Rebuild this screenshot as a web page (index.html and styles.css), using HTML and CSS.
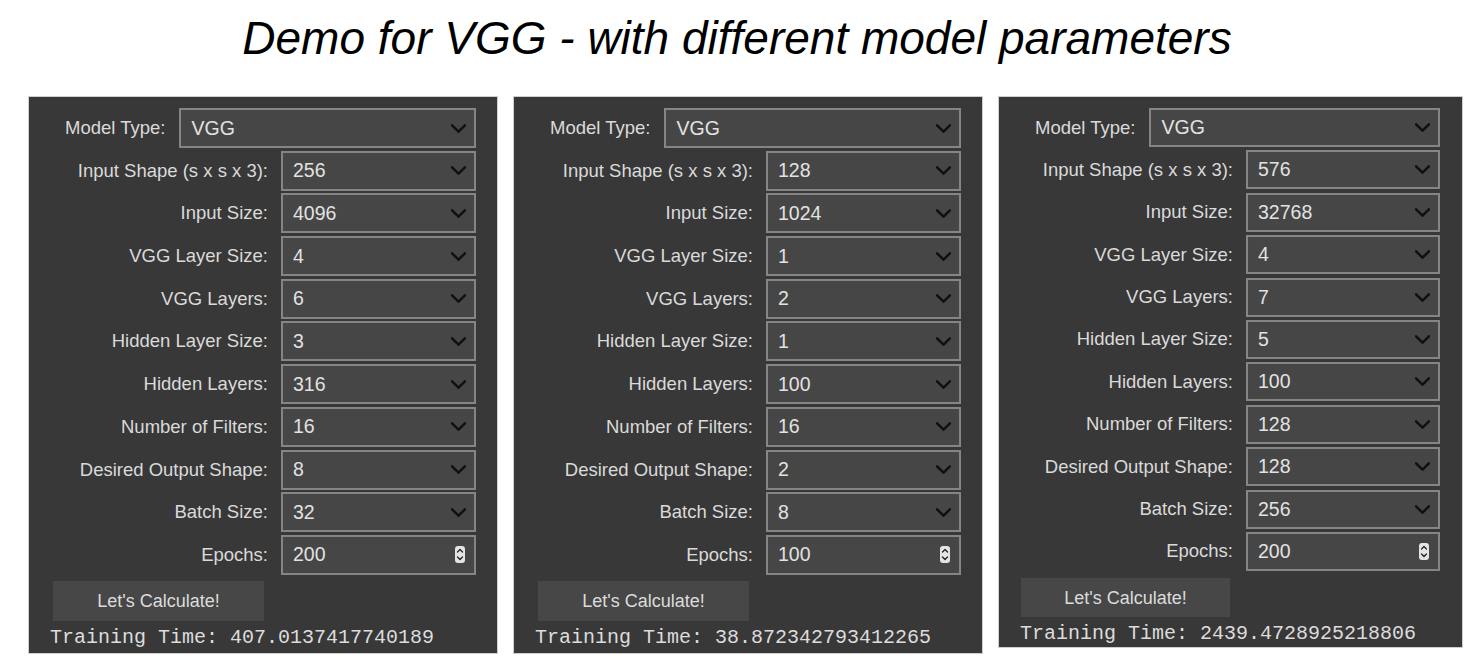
FILE: index.html
```html
<!DOCTYPE html>
<html lang="en">
<head>
<meta charset="utf-8">
<title>Demo for VGG</title>
<link rel="stylesheet" href="styles.css">
</head>
<body>
<h1 class="title">Demo for VGG - with different model parameters</h1>
<div class="panels">

  <section class="panel">
    <div class="rows">
      <div class="row row--model"><span class="label">Model Type:</span><div class="select"><span>VGG</span><svg class="chev" viewBox="0 0 14 8"><path d="M1 1l6 6 6-6"/></svg></div></div>
      <div class="row"><span class="label">Input Shape (s x s x 3):</span><div class="select"><span>256</span><svg class="chev" viewBox="0 0 14 8"><path d="M1 1l6 6 6-6"/></svg></div></div>
      <div class="row"><span class="label">Input Size:</span><div class="select"><span>4096</span><svg class="chev" viewBox="0 0 14 8"><path d="M1 1l6 6 6-6"/></svg></div></div>
      <div class="row"><span class="label">VGG Layer Size:</span><div class="select"><span>4</span><svg class="chev" viewBox="0 0 14 8"><path d="M1 1l6 6 6-6"/></svg></div></div>
      <div class="row"><span class="label">VGG Layers:</span><div class="select"><span>6</span><svg class="chev" viewBox="0 0 14 8"><path d="M1 1l6 6 6-6"/></svg></div></div>
      <div class="row"><span class="label">Hidden Layer Size:</span><div class="select"><span>3</span><svg class="chev" viewBox="0 0 14 8"><path d="M1 1l6 6 6-6"/></svg></div></div>
      <div class="row"><span class="label">Hidden Layers:</span><div class="select"><span>316</span><svg class="chev" viewBox="0 0 14 8"><path d="M1 1l6 6 6-6"/></svg></div></div>
      <div class="row"><span class="label">Number of Filters:</span><div class="select"><span>16</span><svg class="chev" viewBox="0 0 14 8"><path d="M1 1l6 6 6-6"/></svg></div></div>
      <div class="row"><span class="label">Desired Output Shape:</span><div class="select"><span>8</span><svg class="chev" viewBox="0 0 14 8"><path d="M1 1l6 6 6-6"/></svg></div></div>
      <div class="row"><span class="label">Batch Size:</span><div class="select"><span>32</span><svg class="chev" viewBox="0 0 14 8"><path d="M1 1l6 6 6-6"/></svg></div></div>
      <div class="row"><span class="label">Epochs:</span><div class="select"><span>200</span><svg class="spin" viewBox="0 0 10 17"><rect x="0" y="0" width="10" height="17" rx="3"/><path d="M2.5 6l2.5-2.5 2.5 2.5M2.5 11l2.5 2.5 2.5-2.5"/></svg></div></div>
    </div>
    <button class="calc">Let's Calculate!</button>
    <div class="result">Training Time: 407.0137417740189</div>
  </section>

  <section class="panel">
    <div class="rows">
      <div class="row row--model"><span class="label">Model Type:</span><div class="select"><span>VGG</span><svg class="chev" viewBox="0 0 14 8"><path d="M1 1l6 6 6-6"/></svg></div></div>
      <div class="row"><span class="label">Input Shape (s x s x 3):</span><div class="select"><span>128</span><svg class="chev" viewBox="0 0 14 8"><path d="M1 1l6 6 6-6"/></svg></div></div>
      <div class="row"><span class="label">Input Size:</span><div class="select"><span>1024</span><svg class="chev" viewBox="0 0 14 8"><path d="M1 1l6 6 6-6"/></svg></div></div>
      <div class="row"><span class="label">VGG Layer Size:</span><div class="select"><span>1</span><svg class="chev" viewBox="0 0 14 8"><path d="M1 1l6 6 6-6"/></svg></div></div>
      <div class="row"><span class="label">VGG Layers:</span><div class="select"><span>2</span><svg class="chev" viewBox="0 0 14 8"><path d="M1 1l6 6 6-6"/></svg></div></div>
      <div class="row"><span class="label">Hidden Layer Size:</span><div class="select"><span>1</span><svg class="chev" viewBox="0 0 14 8"><path d="M1 1l6 6 6-6"/></svg></div></div>
      <div class="row"><span class="label">Hidden Layers:</span><div class="select"><span>100</span><svg class="chev" viewBox="0 0 14 8"><path d="M1 1l6 6 6-6"/></svg></div></div>
      <div class="row"><span class="label">Number of Filters:</span><div class="select"><span>16</span><svg class="chev" viewBox="0 0 14 8"><path d="M1 1l6 6 6-6"/></svg></div></div>
      <div class="row"><span class="label">Desired Output Shape:</span><div class="select"><span>2</span><svg class="chev" viewBox="0 0 14 8"><path d="M1 1l6 6 6-6"/></svg></div></div>
      <div class="row"><span class="label">Batch Size:</span><div class="select"><span>8</span><svg class="chev" viewBox="0 0 14 8"><path d="M1 1l6 6 6-6"/></svg></div></div>
      <div class="row"><span class="label">Epochs:</span><div class="select"><span>100</span><svg class="spin" viewBox="0 0 10 17"><rect x="0" y="0" width="10" height="17" rx="3"/><path d="M2.5 6l2.5-2.5 2.5 2.5M2.5 11l2.5 2.5 2.5-2.5"/></svg></div></div>
    </div>
    <button class="calc">Let's Calculate!</button>
    <div class="result">Training Time: 38.872342793412265</div>
  </section>

  <section class="panel panel--compact">
    <div class="rows">
      <div class="row row--model"><span class="label">Model Type:</span><div class="select"><span>VGG</span><svg class="chev" viewBox="0 0 14 8"><path d="M1 1l6 6 6-6"/></svg></div></div>
      <div class="row"><span class="label">Input Shape (s x s x 3):</span><div class="select"><span>576</span><svg class="chev" viewBox="0 0 14 8"><path d="M1 1l6 6 6-6"/></svg></div></div>
      <div class="row"><span class="label">Input Size:</span><div class="select"><span>32768</span><svg class="chev" viewBox="0 0 14 8"><path d="M1 1l6 6 6-6"/></svg></div></div>
      <div class="row"><span class="label">VGG Layer Size:</span><div class="select"><span>4</span><svg class="chev" viewBox="0 0 14 8"><path d="M1 1l6 6 6-6"/></svg></div></div>
      <div class="row"><span class="label">VGG Layers:</span><div class="select"><span>7</span><svg class="chev" viewBox="0 0 14 8"><path d="M1 1l6 6 6-6"/></svg></div></div>
      <div class="row"><span class="label">Hidden Layer Size:</span><div class="select"><span>5</span><svg class="chev" viewBox="0 0 14 8"><path d="M1 1l6 6 6-6"/></svg></div></div>
      <div class="row"><span class="label">Hidden Layers:</span><div class="select"><span>100</span><svg class="chev" viewBox="0 0 14 8"><path d="M1 1l6 6 6-6"/></svg></div></div>
      <div class="row"><span class="label">Number of Filters:</span><div class="select"><span>128</span><svg class="chev" viewBox="0 0 14 8"><path d="M1 1l6 6 6-6"/></svg></div></div>
      <div class="row"><span class="label">Desired Output Shape:</span><div class="select"><span>128</span><svg class="chev" viewBox="0 0 14 8"><path d="M1 1l6 6 6-6"/></svg></div></div>
      <div class="row"><span class="label">Batch Size:</span><div class="select"><span>256</span><svg class="chev" viewBox="0 0 14 8"><path d="M1 1l6 6 6-6"/></svg></div></div>
      <div class="row"><span class="label">Epochs:</span><div class="select"><span>200</span><svg class="spin" viewBox="0 0 10 17"><rect x="0" y="0" width="10" height="17" rx="3"/><path d="M2.5 6l2.5-2.5 2.5 2.5M2.5 11l2.5 2.5 2.5-2.5"/></svg></div></div>
    </div>
    <button class="calc">Let's Calculate!</button>
    <div class="result">Training Time: 2439.4728925218806</div>
  </section>

</div>
</body>
</html>
```

FILE: styles.css
```css
* { box-sizing: border-box; }

body {
  margin: 0;
  background: #ffffff;
  font-family: "Liberation Sans", Arial, sans-serif;
}

.title {
  margin: 0;
  height: 96px;
  padding-top: 12px;
  text-align: center;
  font-family: "Liberation Sans", Arial, sans-serif;
  font-style: italic;
  font-weight: normal;
  font-size: 46px;
  line-height: 52px;
  color: #000;
  padding-right: 8px;
}

.panels {
  display: flex;
  align-items: flex-start;
  gap: 15px;
  padding-left: 28px;
}

.panel {
  width: 470px;
  background: #383838;
  border: 1px solid #cfcfcf;
  padding: 11px 21px 3px 21px;
  display: flex;
  flex-direction: column;
}

.rows {
  display: flex;
  flex-direction: column;
  gap: 2.7px;
}

.row {
  display: flex;
  align-items: center;
  height: 40px;
}

.label {
  width: 218px;
  flex: none;
  text-align: right;
  margin-right: 13px;
  color: #dadada;
  font-size: 18.5px;
  white-space: nowrap;
}

.row--model .label {
  width: auto;
  padding-left: 15px;
  margin-right: 14px;
}

.select {
  flex: 1;
  height: 100%;
  display: flex;
  align-items: center;
  justify-content: space-between;
  background: #464646;
  border: 2px solid #858585;
  padding: 0 6px 0 10px;
  color: #e2e2e2;
  font-size: 19.5px;
}

.chev {
  width: 15px;
  height: 9px;
  fill: none;
  stroke: #101010;
  stroke-width: 2.3;
  stroke-linecap: round;
  stroke-linejoin: round;
  margin-right: 2px;
}

.spin {
  width: 10px;
  height: 17px;
  margin-right: 3px;
}

.spin rect { fill: #e4e4e4; }
.spin path {
  fill: none;
  stroke: #222;
  stroke-width: 1.3;
  stroke-linecap: round;
  stroke-linejoin: round;
}

.calc {
  align-self: flex-start;
  margin: 6px 0 0 3px;
  width: 211px;
  height: 40px;
  border: none;
  background: #474747;
  color: #dcdcdc;
  font-family: "Liberation Sans", Arial, sans-serif;
  font-size: 18px;
  padding: 2px 0 0 0;
}

.result {
  margin-top: 5px;
  font-family: "Liberation Mono", "Courier New", monospace;
  font-size: 20px;
  line-height: 24px;
  color: #dcdcdc;
  white-space: nowrap;
}

.panel--compact {
  width: 465px;
  padding: 11px 22px 1px 21px;
}

.panel--compact .rows { gap: 3.4px; }
.panel--compact .row { height: 39px; }
.panel--compact .label { width: 213px; }
.panel--compact .row--model .label { width: auto; }
.panel--compact .calc { width: 209px; height: 39px; margin: 7px 0 0 1px; }
.panel--compact .result { margin-top: 5px; }
```
